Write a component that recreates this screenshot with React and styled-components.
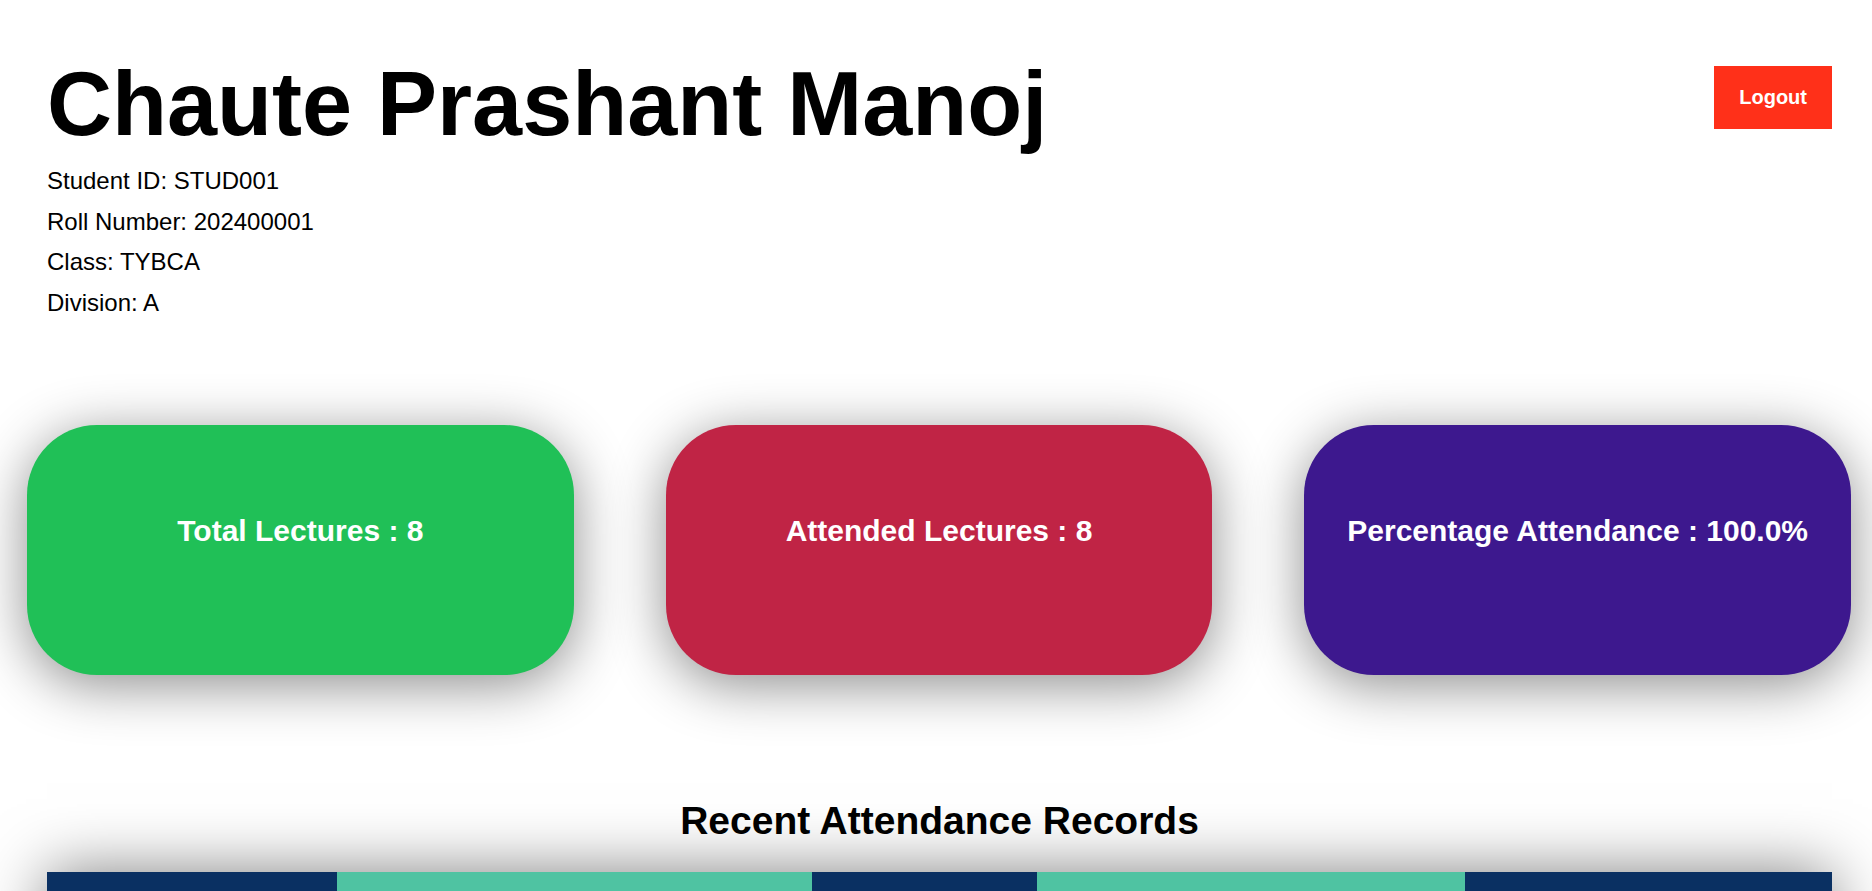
import React from 'react';
import styled, { createGlobalStyle } from 'styled-components';

const GlobalStyle = createGlobalStyle`
    body {
        margin: 0;
        background-color: #ffffff;
        font-family: "Liberation Sans", Arial, sans-serif;
        color: #000000;
    }
    `;

const Page = styled.div`
    padding-bottom: 60px;
    `;
const Header = styled.header`
    display: flex;
    justify-content: space-between;
    align-items: flex-start;
    padding: 52px 40px 0 47px;
    `;
const Name = styled.h1`
    margin: 0;
    font-size: 90px;
    line-height: 104px;
    font-weight: 700;
    `;
const InfoList = styled.div`
    margin-top: 5px;
    `;
const InfoLine = styled.p`
    margin: 0;
    font-size: 24px;
    line-height: 40.7px;
    `;
const LogoutButton = styled.button`
    margin-top: 14px;
    padding: 20px 25px;
    border: none;
    background-color: #ff3019;
    color: #ffffff;
    font-family: "Liberation Sans", Arial, sans-serif;
    font-size: 20px;
    font-weight: 700;
    line-height: 23px;
    cursor: pointer;
    `;
const CardRow = styled.div`
    display: flex;
    gap: 92px;
    margin-top: 101px;
    padding: 0 21px 0 27px;
    `;
const StatCard = styled.div`
    flex: 1;
    height: 250px;
    box-sizing: border-box;
    padding-bottom: 38px;
    border-radius: 70px;
    display: flex;
    align-items: center;
    justify-content: center;
    background-color: ${({ $color }) => $color};
    box-shadow: 0 10px 55px rgba(0, 0, 0, 0.45);
    `;
const StatText = styled.h3`
    margin: 0;
    color: #ffffff;
    font-size: 30px;
    font-weight: 700;
    `;
const Records = styled.section`
    padding: 0 40px 0 47px;
    `;
const RecordsTitle = styled.h2`
    margin: 123px 0 29px;
    text-align: center;
    font-size: 39px;
    line-height: 45px;
    font-weight: 700;
    `;
const Table = styled.table`
    width: 100%;
    table-layout: fixed;
    border-collapse: collapse;
    box-shadow: 0 0 60px rgba(0, 0, 0, 0.5);
    `;
const HeadCell = styled.th`
    box-sizing: border-box;
    width: ${({ $width }) => $width}px;
    padding: 24px 16px;
    background-color: ${({ $dark }) => ($dark ? '#0a3062' : '#4fc3a2')};
    color: #ffffff;
    font-size: 20px;
    text-align: left;
    `;
const Cell = styled.td`
    padding: 16px;
    font-size: 18px;
    border-bottom: 1px solid #e2e2e2;
    `;

const columns = [
    { label: 'Date', width: 290 },
    { label: 'Subject', width: 475 },
    { label: 'Lecture', width: 225 },
    { label: 'Teacher', width: 428 },
    { label: 'Status', width: 367 },
];

const rows = [
    ['2024-07-08', 'Web Development', 'L1', 'Prof. Patil', 'Present'],
    ['2024-07-08', 'Data Structures', 'L2', 'Prof. Kulkarni', 'Present'],
    ['2024-07-07', 'Operating Systems', 'L3', 'Prof. Deshmukh', 'Present'],
    ['2024-07-07', 'Java Programming', 'L4', 'Prof. Joshi', 'Present'],
];

const stats = [
    { label: 'Total Lectures : 8', color: '#20c057' },
    { label: 'Attended Lectures : 8', color: '#c02445' },
    { label: 'Percentage Attendance : 100.0%', color: '#3d188e' },
];

const App = () => (
    <Page>
        <GlobalStyle />
        <Header>
            <div>
                <Name>Chaute Prashant Manoj</Name>
                <InfoList>
                    <InfoLine>Student ID: STUD001</InfoLine>
                    <InfoLine>Roll Number: 202400001</InfoLine>
                    <InfoLine>Class: TYBCA</InfoLine>
                    <InfoLine>Division: A</InfoLine>
                </InfoList>
            </div>
            <LogoutButton>Logout</LogoutButton>
        </Header>

        <CardRow>
            {stats.map((s) => (
                <StatCard key={s.label} $color={s.color}>
                    <StatText>{s.label}</StatText>
                </StatCard>
            ))}
        </CardRow>

        <Records>
            <RecordsTitle>Recent Attendance Records</RecordsTitle>
            <Table>
                <thead>
                    <tr>
                        {columns.map((c, i) => (
                            <HeadCell key={c.label} $width={c.width} $dark={i % 2 === 0}>
                                {c.label}
                            </HeadCell>
                        ))}
                    </tr>
                </thead>
                <tbody>
                    {rows.map((r, i) => (
                        <tr key={i}>
                            {r.map((v, j) => <Cell key={j}>{v}</Cell>)}
                        </tr>
                    ))}
                </tbody>
            </Table>
        </Records>
    </Page>
);

export default App;
